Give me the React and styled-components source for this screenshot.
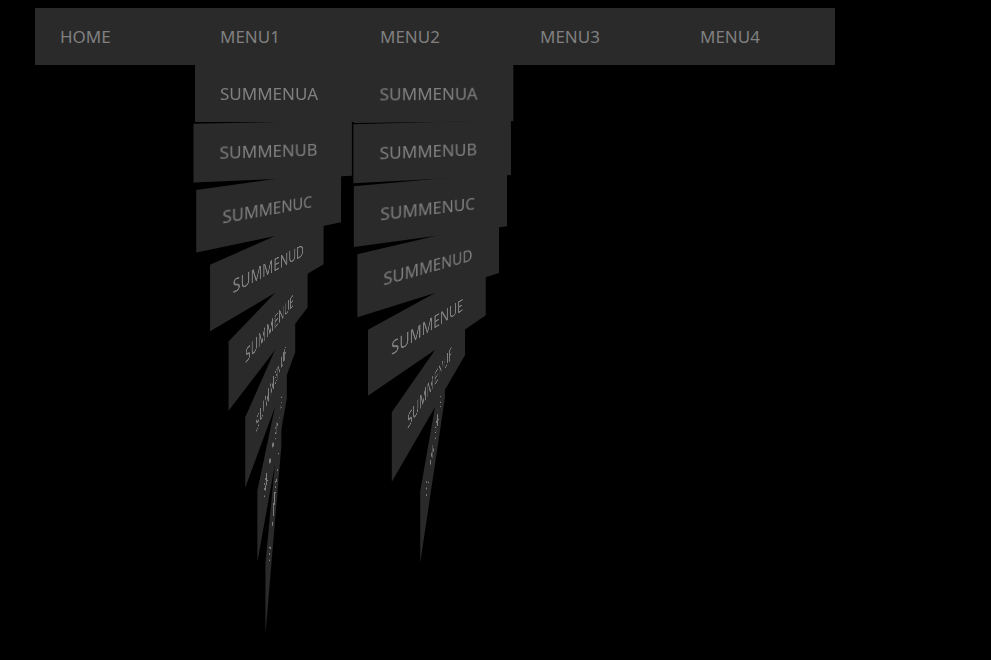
import React from "react";
import styled, { createGlobalStyle } from "styled-components";

const GlobalStyle = createGlobalStyle`
  body {
    margin: 0;
    background: #000;
    font-family: "Noto Sans", "Open Sans", sans-serif;
    font-size: 17px;
  }
`;

const Navigation = styled.nav`
  box-sizing: border-box;
  min-height: 100vh;
  padding: 8px 35px;
`;

const MenuBar = styled.ul`
  display: flex;
  width: max-content;
  margin: 0;
  padding: 0;
  list-style: none;
  background: #2a2a2a;
`;

const MenuItem = styled.li`
  position: relative;
  width: 160px;
`;

const MenuLink = styled.a`
  display: block;
  padding: 0 25px;
  line-height: 57px;
  color: #808080;
  text-decoration: none;
  white-space: nowrap;
`;

const SubMenu = styled.ul`
  position: absolute;
  top: 100%;
  left: 0;
  width: 100%;
  margin: 0;
  padding: 0;
  list-style: none;
  perspective: 400px;
  perspective-origin: 50% 0;
`;

const SubMenuItem = styled.li`
  background: #2a2a2a;
  transform: rotateY(${({ $angle }) => $angle}deg);
`;

const menus = [
  { label: "HOME", angles: [] },
  { label: "MENU1", angles: [0, 8.4, 26.1, 46, 61.4, 72.5, 79.8, 84.5] },
  { label: "MENU2", angles: [5, 10.4, 17.5, 28.7, 43.8, 63.7, 81.5] },
  { label: "MENU3", angles: [] },
  { label: "MENU4", angles: [] },
];

const subLabels = ["A", "B", "C", "D", "E", "F", "G", "H"].map(
  (letter) => `SUMMENU${letter}`
);

export default function App() {
  return (
    <>
      <GlobalStyle />
      <Navigation>
        <MenuBar>
          {menus.map(({ label, angles }) => (
            <MenuItem key={label}>
              <MenuLink href="#">{label}</MenuLink>
              {angles.length > 0 && (
                <SubMenu>
                  {angles.map((angle, i) => (
                    <SubMenuItem key={subLabels[i]} $angle={angle}>
                      <MenuLink href="#">{subLabels[i]}</MenuLink>
                    </SubMenuItem>
                  ))}
                </SubMenu>
              )}
            </MenuItem>
          ))}
        </MenuBar>
      </Navigation>
    </>
  );
}
